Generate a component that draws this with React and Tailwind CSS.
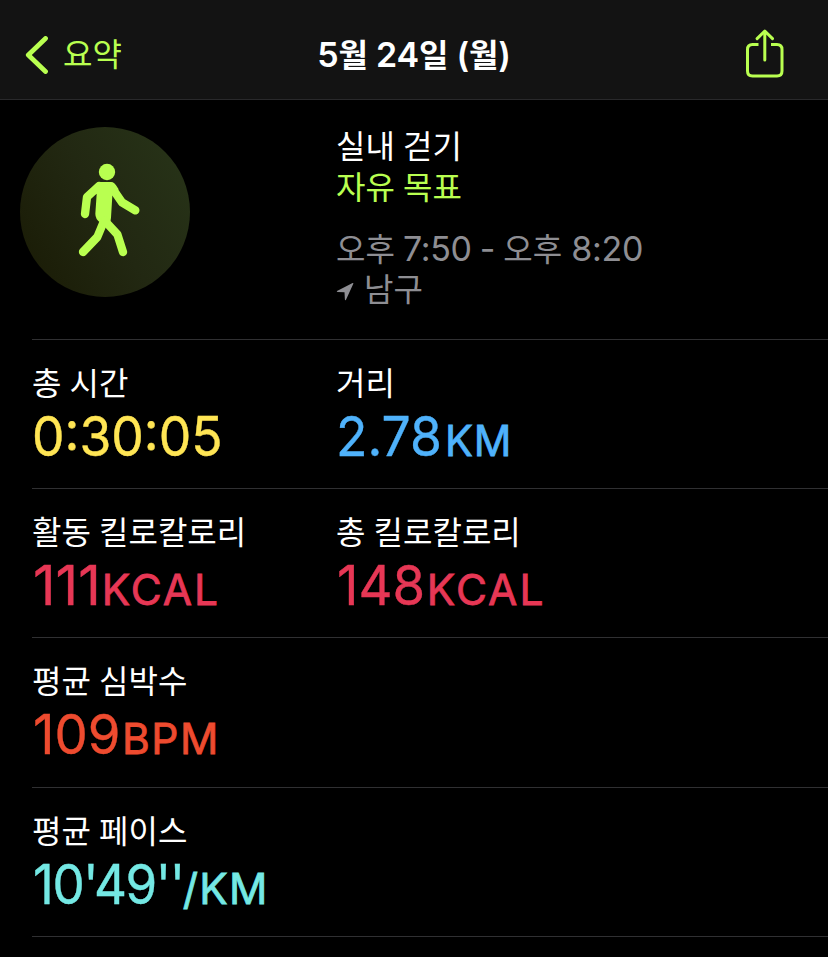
const KO = "font-['Noto_Sans_CJK_KR',sans-serif] [word-spacing:1px]";
const LATIN = "font-['Inter','Noto_Sans_CJK_KR',sans-serif]";

function Metric({ label, value, unit, color, valueClass = "", unitClass = "" }) {
  return (
    <div className="whitespace-nowrap">
      <div className={`${KO} h-[42px] text-[32px] leading-[40px] text-white`}>{label}</div>
      <div className={`${LATIN} flex h-[66px] items-baseline leading-[65px] ${color}`}>
        <span className={`origin-left text-[55.5px] [-webkit-text-stroke:0.4px_currentColor] ${valueClass}`}>{value}</span>
        {unit && <span className={`origin-left text-[42.5px] [-webkit-text-stroke:0.8px_currentColor] ${unitClass}`}>{unit}</span>}
      </div>
    </div>
  );
}

function Row({ children, height = "h-[149px]" }) {
  return (
    <div className={`ml-8 grid grid-cols-[304px_1fr] border-b border-[#303032] pt-[21px] ${height}`}>
      {children}
    </div>
  );
}

function Header() {
  return (
    <header className="grid h-[100px] grid-cols-[1fr_auto_1fr] items-center border-b border-[#29292b] bg-[#131313] pt-[10px]">
      <div className="flex items-center pl-[25px] text-[#b9ff50]">
        <svg width="24" height="38" viewBox="0 0 24 38" fill="none" stroke="currentColor" strokeWidth="4.8" strokeLinecap="round" strokeLinejoin="round">
          <path d="M20.5 2.5L3.3 19L20.5 35.5" />
        </svg>
        <span className={`${KO} -mt-[5px] ml-[14px] text-[32px] leading-[40px]`}>요약</span>
      </div>
      <h1 className={`${LATIN} mt-px text-[34px] font-semibold leading-[40px] tracking-[-0.2px] text-white`}>
        5<span className="text-[32px]">월</span> 24<span className="text-[32px]">일</span> (<span className="text-[32px]">월</span>)
      </h1>
      <div className="flex justify-end pr-[44px] text-[#b9ff50]">
        <svg width="40" height="50" viewBox="0 0 40 50" fill="none" stroke="currentColor" strokeWidth="3" strokeLinecap="round" strokeLinejoin="round" className="-mt-[2px]">
          <path d="M14.5 15.5H8.5Q3.5 15.5 3.5 20.5V42Q3.5 47 8.5 47H33Q38 47 38 42V20.5Q38 15.5 33 15.5H27" strokeLinecap="butt" />
          <path d="M20.8 31V2.5M13.1 9.6L20.8 2L28.5 9.6" />
        </svg>
      </div>
    </header>
  );
}

function WalkBadge() {
  return (
    <div className="ml-[20px] mt-[27px] size-[170px] rounded-full bg-linear-[60deg,#191a04,#222812_50%,#283519]">
      <svg className="size-full text-[#b9ff50]" viewBox="30 36 510 510" fill="none" stroke="currentColor" strokeWidth="25" strokeLinecap="round" strokeLinejoin="round">
        <circle cx="291" cy="171" r="24.5" fill="currentColor" stroke="none" />
        <path d="M267 201H301Q311 201 318 211L326 223L307 242L303 308Q302 320 299 324L270 322Q256 312 256 296L260 238L246 222Z" fill="currentColor" stroke="none" />
        <path d="M267 213L231 246L225 297" />
        <path d="M303 214L336 262L376 286" />
        <path d="M282 318L262 366L219 411" />
        <path d="M285 318L322 358L339 411" />
      </svg>
    </div>
  );
}

export default function App() {
  return (
    <main className="h-[957px] w-[828px] overflow-hidden bg-black">
      <Header />
      <section className="grid h-[239px] grid-cols-[336px_1fr]">
        <WalkBadge />
        <div className={`${KO} whitespace-nowrap pt-[24px] text-[32px] leading-[41px]`}>
          <div className="text-white">실내 걷기</div>
          <div className="text-[#b9ff50]">자유 목표</div>
          <div className="mt-[21px] text-[#8e8e93]">
            <div className="flex h-[40px] items-baseline gap-[8px]">
              <span>오후</span>
              <span className={`${LATIN} text-[34px] tracking-[-0.3px]`}>7:50</span>
              <span className={`${LATIN} text-[34px]`}>-</span>
              <span>오후</span>
              <span className={`${LATIN} ml-px text-[34px] tracking-[-0.3px]`}>8:20</span>
            </div>
            <div className="flex h-[41px] items-center gap-[10px]">
              <svg width="18" height="20" viewBox="0 0 18 20" fill="currentColor" className="mt-[8px]">
                <path d="M1 9L16.6 1Q17.8.6 17.2 2L10 17.8Q9.3 19 8.9 17.6L8.5 10.3L1.5 10.1Q.3 9.7 1 9Z" />
              </svg>
              <span>남구</span>
            </div>
          </div>
        </div>
      </section>
      <div className="ml-8 h-px bg-[#303032]" />
      <Row>
        <Metric label="총 시간" value="0:30:05" color="text-[#ffe554]" valueClass="scale-x-[0.93]" />
        <Metric label="거리" value="2.78" unit="KM" color="text-[#4fb2fb]" valueClass="scale-x-[0.93] -mr-[5px]" unitClass="tracking-[0.7px] scale-x-[0.98]" />
      </Row>
      <Row>
        <Metric label="활동 킬로칼로리" value="111" unit="KCAL" color="text-[#e73755]" valueClass="ml-px mr-px" unitClass="tracking-[1.9px]" />
        <Metric label="총 킬로칼로리" value="148" unit="KCAL" color="text-[#e73755]" valueClass="ml-px scale-x-[0.95] -mr-[3px]" unitClass="tracking-[2px]" />
      </Row>
      <Row height="h-[150px]">
        <Metric label="평균 심박수" value="109" unit="BPM" color="text-[#ee4b2f]" valueClass="ml-px scale-x-[0.95] -mr-[3px]" unitClass="tracking-[1.5px]" />
      </Row>
      <Row>
        <Metric label="평균 페이스" value={"10'49''"} unit="/KM" color="text-[#74e8e4]" valueClass="ml-px tracking-[-1.5px] scale-x-[0.92] -mr-[14px]" unitClass="tracking-[1.2px]" />
      </Row>
    </main>
  );
}
